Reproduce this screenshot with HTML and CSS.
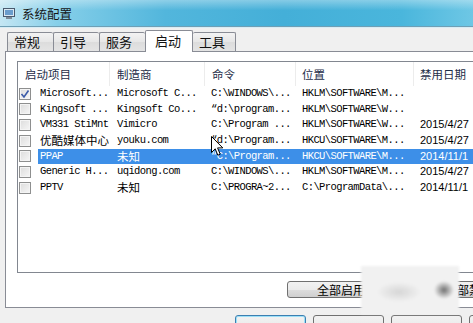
FILE: index.html
```html
<!DOCTYPE html>
<html lang="zh-CN">

<head>
    <meta charset="UTF-8">
    <meta name="viewport" content="width=device-width, initial-scale=1.0">
    <title>系统配置</title>
    <link rel="stylesheet" href="styles.css">
</head>

<body>
    <div class="window">
        <div class="titlebar">
            <svg class="app-icon" width="12" height="12" viewBox="0 0 12 12">
                <rect x="0.5" y="0.5" width="11" height="8" fill="#dbe8f3" stroke="#4a5a6e" />
                <rect x="2" y="2" width="8" height="5" fill="#6a9ccc" />
                <rect x="3" y="9" width="6" height="2" fill="#7d8a98" />
            </svg>
            <span class="title">系统配置</span>
        </div>

        <div class="content">
            <div class="tabs">
                <div class="tab">常规</div>
                <div class="tab">引导</div>
                <div class="tab">服务</div>
                <div class="tab active">启动</div>
                <div class="tab">工具</div>
            </div>

            <div class="panel">
                <div class="list">
                    <div class="row head">
                        <div class="cell first">启动项目</div>
                        <div class="cell">制造商</div>
                        <div class="cell">命令</div>
                        <div class="cell">位置</div>
                        <div class="cell">禁用日期</div>
                    </div>
                    <div class="row">
                        <div class="check checked"><svg width="10" height="10" viewBox="0 0 10 10"><path d="M1.5 5 L4 8 L8.5 1.5" fill="none" stroke="#3a5aa8" stroke-width="1.6" /></svg></div>
                        <div class="cell">Microsoft...</div>
                        <div class="cell">Microsoft C...</div>
                        <div class="cell">C:\WINDOWS\...</div>
                        <div class="cell">HKLM\SOFTWARE\M...</div>
                        <div class="cell date"></div>
                    </div>
                    <div class="row">
                        <div class="check"></div>
                        <div class="cell">Kingsoft ...</div>
                        <div class="cell">Kingsoft Co...</div>
                        <div class="cell">“d:\program...</div>
                        <div class="cell">HKLM\SOFTWARE\W...</div>
                        <div class="cell date"></div>
                    </div>
                    <div class="row">
                        <div class="check"></div>
                        <div class="cell">VM331 StiMnt</div>
                        <div class="cell">Vimicro</div>
                        <div class="cell">C:\Program ...</div>
                        <div class="cell">HKLM\SOFTWARE\W...</div>
                        <div class="cell date">2015/4/27</div>
                    </div>
                    <div class="row">
                        <div class="check"></div>
                        <div class="cell cn">优酷媒体中心</div>
                        <div class="cell">youku.com</div>
                        <div class="cell">“d:\Program...</div>
                        <div class="cell">HKCU\SOFTWARE\M...</div>
                        <div class="cell date">2015/4/27</div>
                    </div>
                    <div class="row selected">
                        <div class="check"></div>
                        <div class="cell">PPAP</div>
                        <div class="cell cn">未知</div>
                        <div class="cell">“C:\Program...</div>
                        <div class="cell">HKCU\SOFTWARE\M...</div>
                        <div class="cell date">2014/11/1</div>
                    </div>
                    <div class="row">
                        <div class="check"></div>
                        <div class="cell">Generic H...</div>
                        <div class="cell">uqidong.com</div>
                        <div class="cell">C:\WINDOWS\...</div>
                        <div class="cell">HKLM\SOFTWARE\M...</div>
                        <div class="cell date">2015/4/27</div>
                    </div>
                    <div class="row">
                        <div class="check"></div>
                        <div class="cell">PPTV</div>
                        <div class="cell cn">未知</div>
                        <div class="cell">C:\PROGRA~2...</div>
                        <div class="cell">C:\ProgramData\...</div>
                        <div class="cell date">2014/11/1</div>
                    </div>
                </div>

                <div class="actions">
                    <button class="btn">全部启用(E)</button>
                    <button class="btn">全部禁用(D)</button>
                </div>
            </div>

            <!-- dialog buttons, only their top edges are in view -->
            <div class="footer">
                <button class="btn default" aria-label="确定"></button>
                <button class="btn" aria-label="取消"></button>
                <button class="btn" aria-label="应用"></button>
                <button class="btn" aria-label="帮助"></button>
            </div>
        </div>

        <!-- blurred watermark patch over the buttons -->
        <div class="smudge"></div>

        <svg class="cursor" width="13" height="21" viewBox="0 0 13 21">
            <path d="M0.5 0.5 L0.5 16.5 L4.2 12.8 L6.8 19.2 L9.2 18.2 L6.6 11.9 L11.8 11.9 Z" fill="#fff" stroke="#000" stroke-width="1" />
        </svg>
    </div>
</body>

</html>
```

FILE: styles.css
```css
body {
    margin: 0;
    background-color: #f0f0f0;
    font-family: "Noto Sans CJK SC", sans-serif;
    overflow: hidden;
}

.window {
    position: relative;
    width: 473px;
    height: 323px;
    overflow: hidden;
}

.titlebar {
    display: flex;
    align-items: center;
    height: 26px;
    padding-left: 3px;
    background:
        linear-gradient(to bottom, rgba(255, 255, 255, 0.35), rgba(255, 255, 255, 0) 40%),
        linear-gradient(to right, #c4e6f3 0%, #86cfe9 12%, #52b6dc 35%, #44afd8 60%, #4ab6dc 85%, #6ec7e5 100%);
    border-bottom: 1px solid #6f9fb5;
    box-shadow: 0 1px 0 #d8edf5;
}

.app-icon {
    margin-top: 1px;
}

.title {
    margin-left: 7px;
    font-size: 12.5px;
    color: #151515;
}

.content {
    padding-top: 3px;
}

.tabs {
    display: flex;
    align-items: flex-end;
    height: 21px;
    margin-left: 7px;
    position: relative;
    z-index: 1;
}

.tab {
    box-sizing: border-box;
    width: 46px;
    height: 19px;
    padding-left: 6px;
    border: 1px solid #898c95;
    border-bottom: none;
    border-right: none;
    border-radius: 2px 2px 0 0;
    background: linear-gradient(to bottom, #f3f3f3, #e6e6e6 50%, #dcdcdc 51%, #e4e4e4);
    font-size: 13px;
    line-height: 17px;
    color: #111;
}

.tab:nth-child(5) {
    width: 43px;
    border-right: 1px solid #898c95;
}

.tab.active {
    width: 48px;
    height: 22px;
    margin-bottom: -1px;
    padding-left: 9px;
    background: #fff;
    border-right: 1px solid #898c95;
    line-height: 19px;
}

.tab.active+.tab {
    border-left: none;
}

.panel {
    box-sizing: border-box;
    width: 520px;
    height: 257px;
    margin-left: 5px;
    padding: 9px 0 0 11px;
    border: 1px solid #898c95;
    background-color: #fff;
}

.list {
    box-sizing: border-box;
    width: 500px;
    height: 212px;
    border: 1px solid #828790;
    background-color: #fff;
}

.row {
    display: grid;
    grid-template-columns: 20px 72px 95px 91px 118px 90px;
    height: 15.67px;
    align-items: center;
    font-family: "Liberation Mono", "Noto Sans CJK SC", monospace;
    font-size: 10.5px;
    letter-spacing: -0.6px;
    color: #000;
    white-space: pre;
}

.row .cell {
    height: 100%;
    padding-left: 2px;
    line-height: 15.67px;
    overflow: hidden;
}

.row .cell+.cell {
    padding-left: 7px;
}

.row .cell:nth-child(4),
.row .cell:nth-child(5),
.row .cell:nth-child(6) {
    padding-left: 6px;
}

.row.head {
    grid-template-columns: 92px 95px 91px 118px 90px;
    height: 24px;
    font-family: "Noto Sans CJK SC", sans-serif;
    font-size: 11.5px;
    letter-spacing: 0;
    color: #1e2d48;
}

.row.head .cell {
    line-height: 24px;
    border-right: 1px solid #ececec;
}

.row.head .cell.first {
    padding-left: 7px;
}

.cn {
    font-family: "Noto Sans CJK SC", sans-serif;
    font-size: 11.5px;
    letter-spacing: 0;
}

.row .cell.date {
    font-family: "Liberation Sans", sans-serif;
    font-size: 11px;
    letter-spacing: 0;
}

.row.selected .cell {
    background-color: #3d8fe8;
    color: #fff;
}

.check {
    box-sizing: border-box;
    width: 12px;
    height: 12px;
    margin-left: 1px;
    border: 1px solid #8e8f8f;
    background: linear-gradient(135deg, #dcdcdc, #f6f6f6);
    box-shadow: inset 0 0 0 1px #f4f4f4;
}

.check svg {
    display: block;
}

.actions {
    display: flex;
    gap: 8px;
    margin-top: 8px;
    padding-left: 270px;
}

.btn {
    box-sizing: border-box;
    width: 120px;
    height: 17px;
    padding: 0;
    border: 1px solid #707070;
    border-radius: 3px;
    background: linear-gradient(to bottom, #f2f2f2, #ebebeb 50%, #dddddd 51%, #cfcfcf);
    font-family: "Noto Sans CJK SC", sans-serif;
    font-size: 12px;
    line-height: 15px;
    color: #000;
    text-align: left;
    padding-left: 29px;
    flex-shrink: 0;
}

.footer {
    display: flex;
    gap: 7px;
    margin-top: 7px;
    padding-left: 235px;
}

.footer .btn {
    width: 71px;
    height: 22px;
    padding-left: 0;
}

.footer .btn.default {
    border-color: #3c7fb1;
    box-shadow: inset 0 0 0 1px #9ce0f8;
}

.smudge {
    position: absolute;
    left: 361px;
    top: 266px;
    width: 97px;
    height: 48px;
    background:
        radial-gradient(ellipse 10px 9px at 83px 24px, #6f6f6f, rgba(120, 120, 120, 0) 100%),
        radial-gradient(ellipse 22px 10px at 38px 26px, #d6d6d6, rgba(214, 214, 214, 0) 100%),
        #f1f1f1;
    box-shadow: 1px 0 0 #f1f1f1;
    filter: blur(1px);
}

.cursor {
    position: absolute;
    left: 211px;
    top: 136px;
}
```
